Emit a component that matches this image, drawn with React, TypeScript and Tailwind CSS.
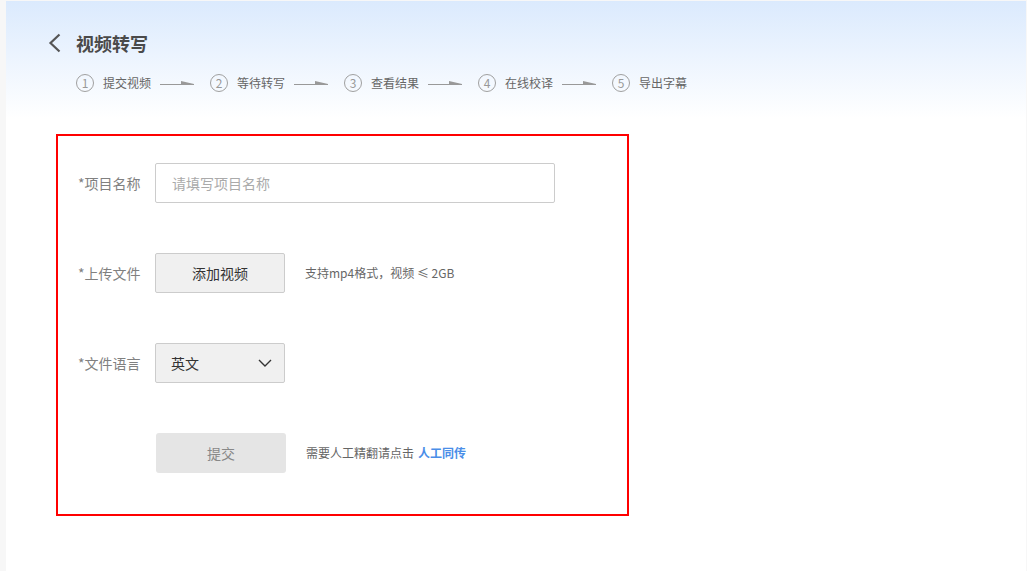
import React from "react";

const steps = ["提交视频", "等待转写", "查看结果", "在线校译", "导出字幕"];

function Arrow() {
  return (
    <svg width="34" height="8" viewBox="0 0 34 8" className="block">
      <line x1="0" y1="5.5" x2="34" y2="5.5" stroke="#999" strokeWidth="1.2" />
      <polygon points="21,2 34,5 34,6 21,6" fill="#999" />
    </svg>
  );
}

export default function App() {
  return (
    <div
      className="min-h-[571px] bg-[#f7f7f7] pl-[6px] pt-px pr-px"
      style={{ fontFamily: '"Noto Sans CJK SC", "Noto Sans", sans-serif' }}
    >
      <div className="bg-white min-h-[570px]">
        <div className="h-[118px] bg-gradient-to-b from-[#dbeafd] to-white pl-[41px] pt-[32px]">
          <div className="flex items-center h-[20px]">
            <svg width="15" height="20" viewBox="0 0 15 20" className="block">
              <polyline points="12.5,1.5 3.5,10 12.5,18.5" fill="none" stroke="#555" strokeWidth="2.2" strokeLinejoin="miter" />
            </svg>
            <span className="ml-[14px] text-[18px] leading-[20px] font-bold text-[#4a4a4a]">视频转写</span>
          </div>
          <div className="flex items-center pl-[29px] mt-[21px] h-[18px]">
            {steps.map((s, i) => (
              <div key={s} className="flex items-center">
                <div className="w-[18px] h-[18px] rounded-full border border-[#a0a0a0] flex items-center justify-center text-[12px] leading-none text-[#999]">
                  {i + 1}
                </div>
                <span className="ml-[9px] text-[12px] leading-[18px] text-[#666]">{s}</span>
                {i < steps.length - 1 && (
                  <div className="ml-[9px] mr-[16px]">
                    <Arrow />
                  </div>
                )}
              </div>
            ))}
          </div>
        </div>

        <div className="ml-[50px] mt-[15px] w-[573px] h-[382px] border-2 border-[#f00] pl-[20px] pt-[27px]">
          <div className="flex flex-col gap-[50px]">
            <div className="flex items-center h-[40px]">
              <span className="w-[77px] text-[14px] text-[#808080]">*项目名称</span>
              <input
                className="w-[400px] h-[40px] border border-[#ccc] rounded-[2px] px-[16px] text-[14px] text-[#333] placeholder:text-[#aaa] outline-none"
                placeholder="请填写项目名称"
              />
            </div>
            <div className="flex items-center h-[40px]">
              <span className="w-[77px] text-[14px] text-[#808080]">*上传文件</span>
              <button className="w-[130px] h-[40px] bg-[#f0f0f0] border border-[#ccc] rounded-[2px] text-[14px] text-[#333]">
                添加视频
              </button>
              <span className="ml-[20px] text-[12px] text-[#666]">支持mp4格式，视频 ≤ 2GB</span>
            </div>
            <div className="flex items-center h-[40px]">
              <span className="w-[77px] text-[14px] text-[#808080]">*文件语言</span>
              <div className="w-[130px] h-[40px] bg-[#f0f0f0] border border-[#ccc] rounded-[2px] flex items-center justify-between pl-[15px] pr-[12px]">
                <span className="text-[14px] text-[#333]">英文</span>
                <svg width="14" height="8" viewBox="0 0 14 8" className="block">
                  <polyline points="1,1 7,7 13,1" fill="none" stroke="#333" strokeWidth="1.4" />
                </svg>
              </div>
            </div>
            <div className="flex items-center h-[40px] pl-[78px]">
              <button className="w-[130px] h-[40px] bg-[#e5e5e5] rounded-[3px] text-[14px] text-[#888]">提交</button>
              <span className="ml-[20px] text-[12px] text-[#666]">需要人工精翻请点击</span>
              <span className="ml-[4px] text-[12px] font-bold text-[#4a8ee8]">人工同传</span>
            </div>
          </div>
        </div>
      </div>
    </div>
  );
}
